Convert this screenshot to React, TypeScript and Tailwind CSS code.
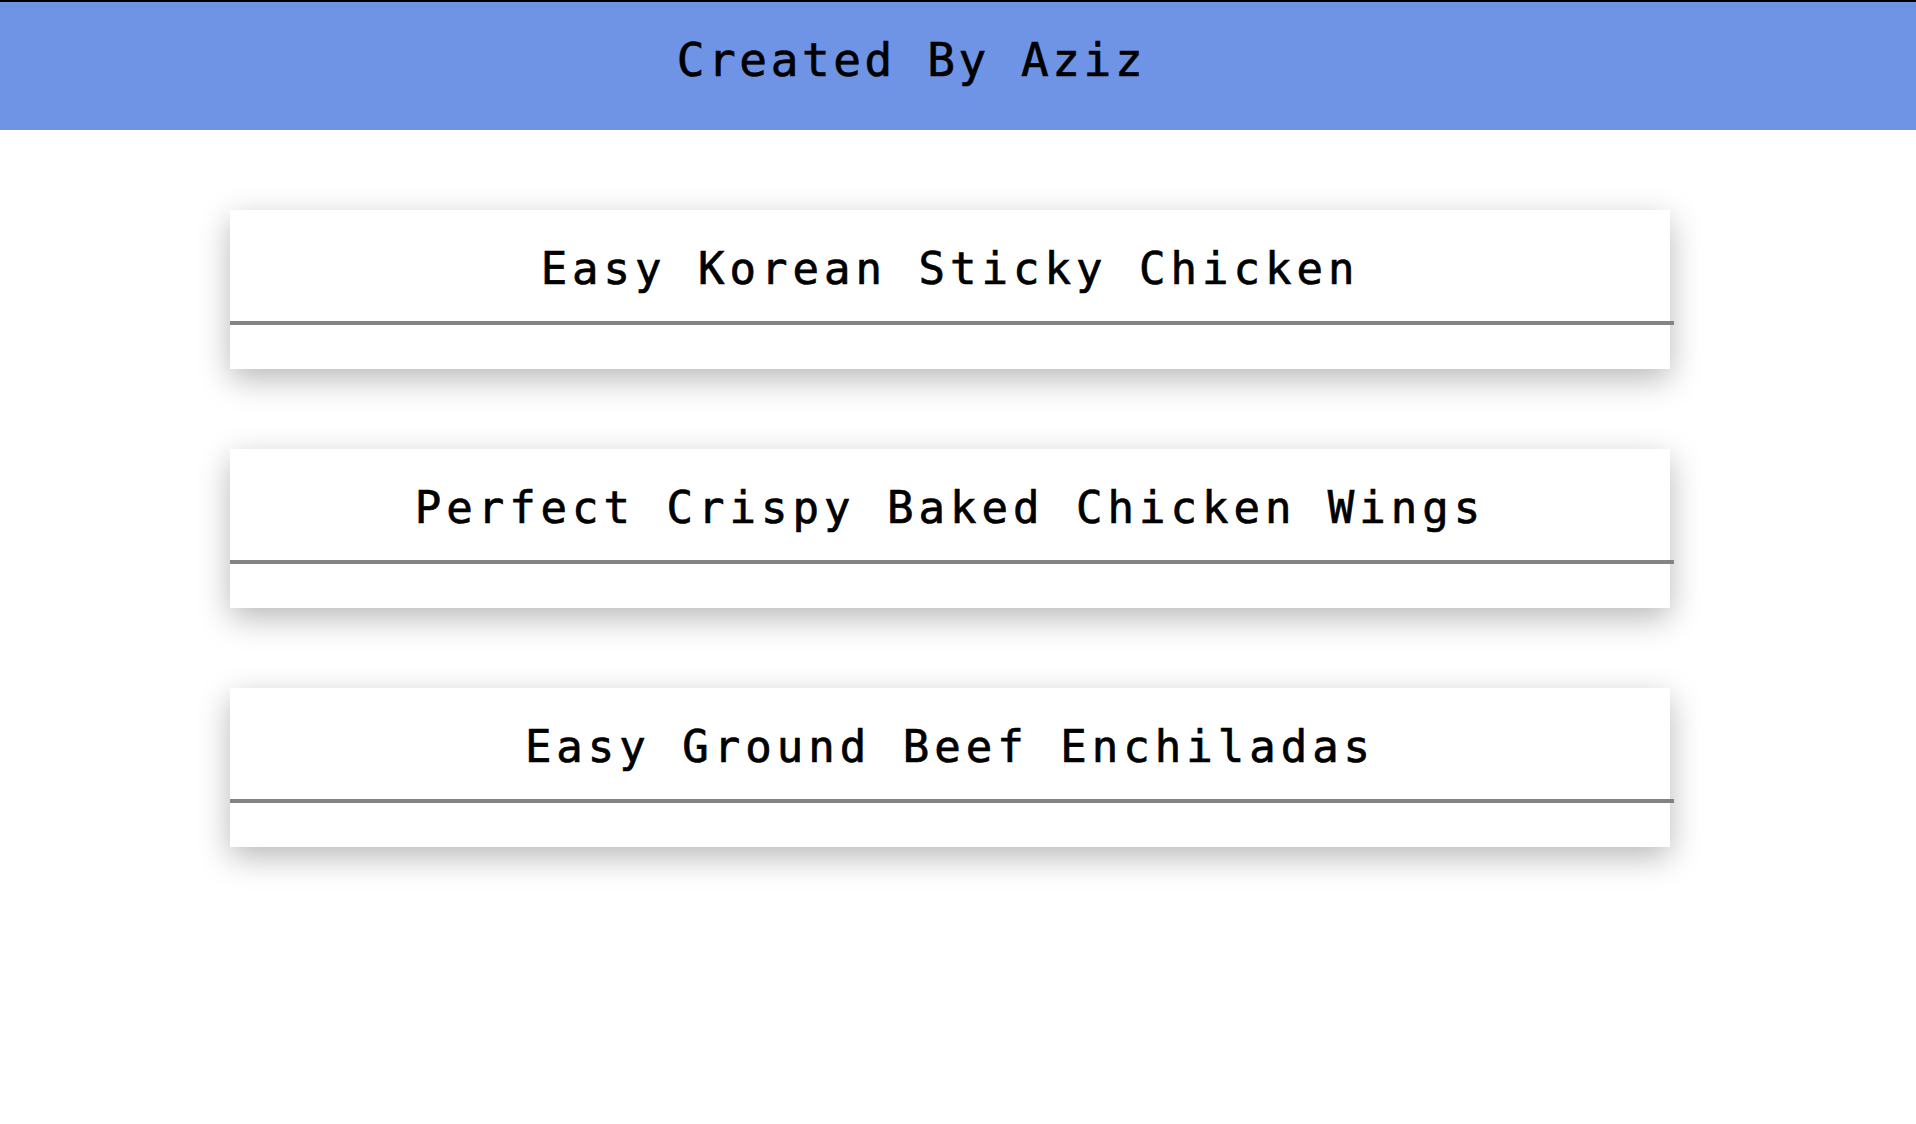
const RECIPES = [
    "Easy Korean Sticky Chicken",
    "Perfect Crispy Baked Chicken Wings",
    "Easy Ground Beef Enchiladas",
];

function RecipeCard({ title }: { title: string }) {
    return (
        <div className="w-[1440px] ml-[230px] bg-white shadow-[0_10px_30px_rgba(0,0,0,0.28)]">
            <div className="h-[111px] pt-[7px] flex items-center justify-center">
                <h2 className="text-[44px] leading-none tracking-[5px] text-black [-webkit-text-stroke:0.7px_black]">
                    {title}
                </h2>
            </div>
            <div className="w-[1444px] h-[4px] bg-[#838383]"></div>
            <div className="h-[44px]"></div>
        </div>
    );
}

export default function App() {
    return (
        <div className="min-h-screen bg-white font-['DejaVu_Sans_Mono',monospace]">
            <header className="h-[130px] border-t-2 border-black bg-[#6f94e5] flex items-center justify-center pr-[93px]">
                <h1 className="text-[46px] leading-none tracking-[3.6px] text-black -mt-[12px] [-webkit-text-stroke:0.7px_black]">
                    Created By Aziz
                </h1>
            </header>
            <main className="pt-[80px] flex flex-col gap-[80px] pb-[80px]">
                {RECIPES.map((title) => (
                    <RecipeCard key={title} title={title} />
                ))}
            </main>
        </div>
    );
}
